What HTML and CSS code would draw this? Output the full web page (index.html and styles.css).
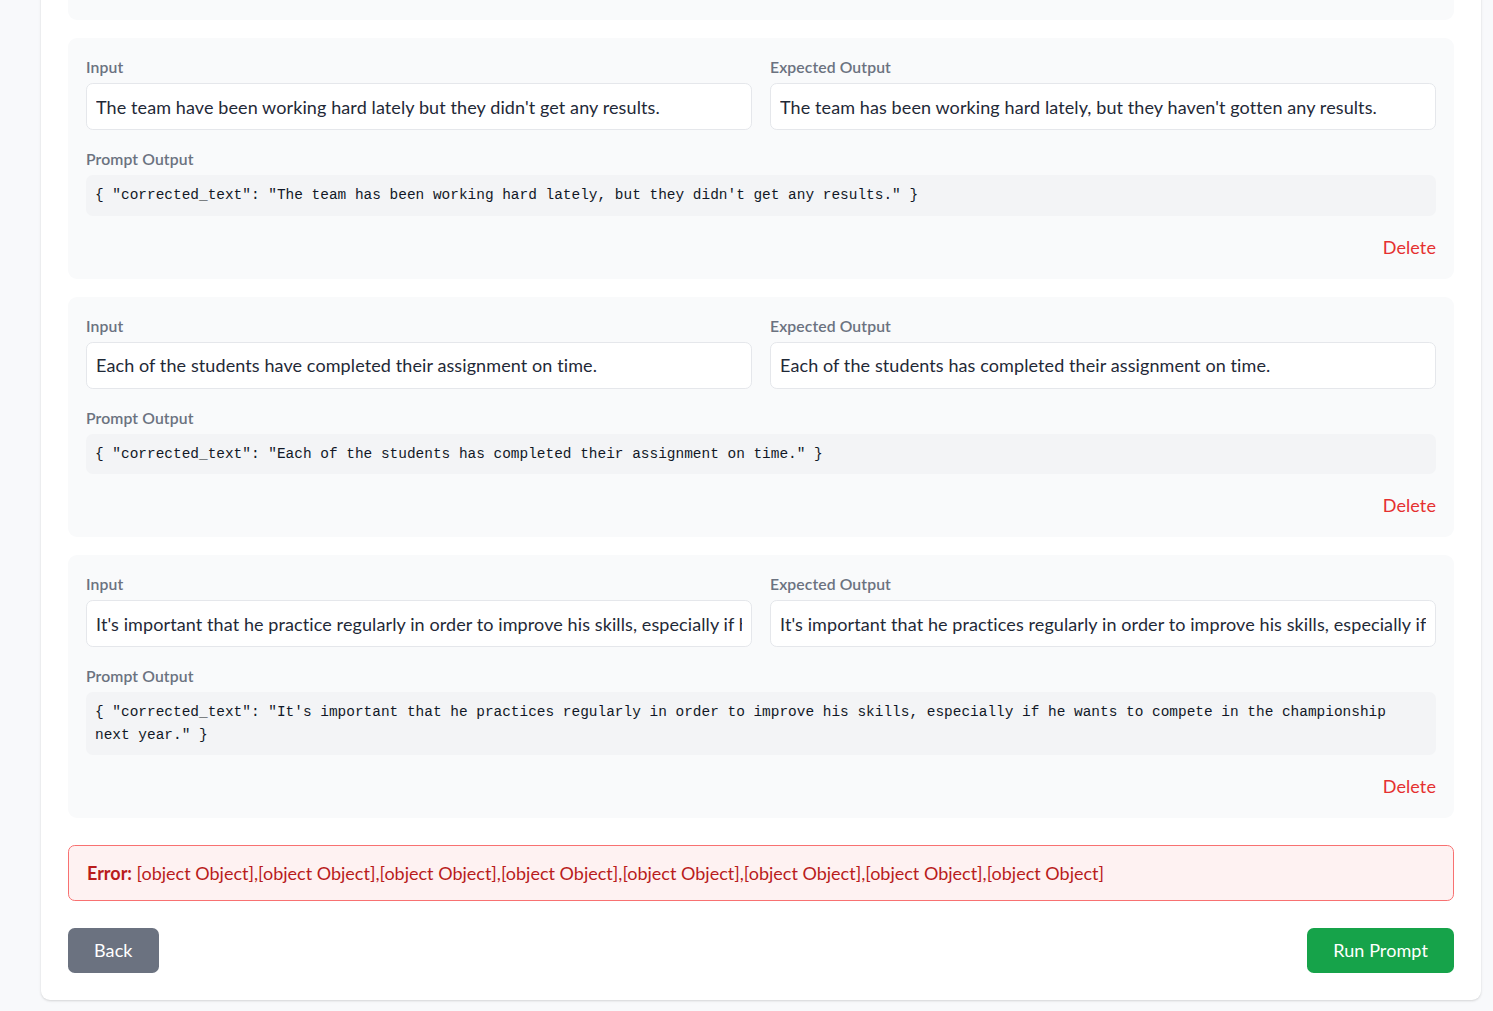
FILE: index.html
```html
<!DOCTYPE html>
<html lang="en">
<head>
<meta charset="utf-8">
<title>Test Cases</title>
<link rel="stylesheet" href="styles.css">
</head>
<body>
<div class="page">
  <div class="panel">
    <div class="case case-tail"></div>

    <div class="case">
      <div class="row">
        <div class="field"><label class="label">Input</label><input class="text-input" type="text" value="The team have been working hard lately but they didn't get any results."></div>
        <div class="field"><label class="label">Expected Output</label><input class="text-input" type="text" value="The team has been working hard lately, but they haven't gotten any results."></div>
      </div>
      <div class="output"><label class="label">Prompt Output</label><pre class="code">{ "corrected_text": "The team has been working hard lately, but they didn't get any results." }</pre></div>
      <div class="foot"><button class="delete" type="button">Delete</button></div>
    </div>

    <div class="case">
      <div class="row">
        <div class="field"><label class="label">Input</label><input class="text-input" type="text" value="Each of the students have completed their assignment on time."></div>
        <div class="field"><label class="label">Expected Output</label><input class="text-input" type="text" value="Each of the students has completed their assignment on time."></div>
      </div>
      <div class="output"><label class="label">Prompt Output</label><pre class="code">{ "corrected_text": "Each of the students has completed their assignment on time." }</pre></div>
      <div class="foot"><button class="delete" type="button">Delete</button></div>
    </div>

    <div class="case">
      <div class="row">
        <div class="field"><label class="label">Input</label><input class="text-input" type="text" value="It's important that he practice regularly in order to improve his skills, especially if he wants to compete in the championship next year."></div>
        <div class="field"><label class="label">Expected Output</label><input class="text-input" type="text" value="It's important that he practices regularly in order to improve his skills, especially if he wants to compete in the championship next year."></div>
      </div>
      <div class="output"><label class="label">Prompt Output</label><pre class="code">{ "corrected_text": "It's important that he practices regularly in order to improve his skills, especially if he wants to compete in the championship next year." }</pre></div>
      <div class="foot"><button class="delete" type="button">Delete</button></div>
    </div>

    <div class="error"><strong>Error:</strong> [object Object],[object Object],[object Object],[object Object],[object Object],[object Object],[object Object],[object Object]</div>

    <div class="actions">
      <button class="btn btn-back" type="button">Back</button>
      <button class="btn btn-run" type="button">Run Prompt</button>
    </div>
  </div>
</div>
</body>
</html>
```

FILE: styles.css
```css
* { box-sizing: border-box; }

body {
  margin: 0;
  background: #f8f9fb;
  font-family: Lato, "Liberation Sans", sans-serif;
  letter-spacing: 0.1px;
  color: #1f2937;
}

.page {
  padding: 0 12px 11px 41px;
}

.panel {
  margin-top: -27px;
  background: #ffffff;
  border-radius: 0 0 9px 9px;
  box-shadow: 0 1px 3px rgba(0, 0, 0, 0.1), 0 1px 2px rgba(0, 0, 0, 0.06);
  padding: 27px;
}

.case {
  background: #f9fafb;
  border-radius: 9px;
  padding: 18px;
  margin-bottom: 18px;
}

.case-tail {
  height: 20px;
  padding: 0;
  border-radius: 0 0 9px 9px;
}

.row {
  display: grid;
  grid-template-columns: 1fr 1fr;
  gap: 18px;
}

.label {
  display: block;
  font-size: 15.75px;
  line-height: 22.5px;
  font-weight: 600;
  color: #6b7280;
  margin-bottom: 4.5px;
}

.text-input {
  display: block;
  width: 100%;
  height: 47px;
  border: 1px solid #e5e7eb;
  border-radius: 6.75px;
  padding: 9px;
  background: #ffffff;
  font: inherit;
  font-size: 18px;
  line-height: 27px;
  letter-spacing: 0.1px;
  color: #1f2937;
  outline: none;
}

.output {
  margin-top: 18px;
}

.code {
  margin: 0;
  background: #f3f4f6;
  border-radius: 6.75px;
  padding: 9px;
  font-family: "Liberation Mono", "DejaVu Sans Mono", monospace;
  font-size: 14.45px;
  line-height: 22.5px;
  letter-spacing: 0;
  color: #111827;
  white-space: pre-wrap;
}

.foot {
  display: flex;
  justify-content: flex-end;
  margin-top: 18px;
}

.delete {
  background: none;
  border: 0;
  padding: 0;
  font: inherit;
  font-size: 18px;
  line-height: 27px;
  letter-spacing: 0.1px;
  color: #e53030;
  cursor: pointer;
}

.error {
  margin-top: 27px;
  margin-bottom: 27px;
  border: 1px solid #f87171;
  background: #fef2f2;
  color: #b91c1c;
  border-radius: 6.75px;
  padding: 13.5px 18px;
  font-size: 18px;
  line-height: 27px;
  letter-spacing: 0;
}

.error strong { font-weight: 700; }

.actions {
  display: flex;
  justify-content: space-between;
}

.btn {
  border: 0;
  border-radius: 6.75px;
  padding: 9px 26px;
  font: inherit;
  font-size: 18px;
  line-height: 27px;
  letter-spacing: 0.1px;
  color: #ffffff;
  cursor: pointer;
}

.btn-back { background: #6b7280; }
.btn-run { background: #16a34a; }
```
